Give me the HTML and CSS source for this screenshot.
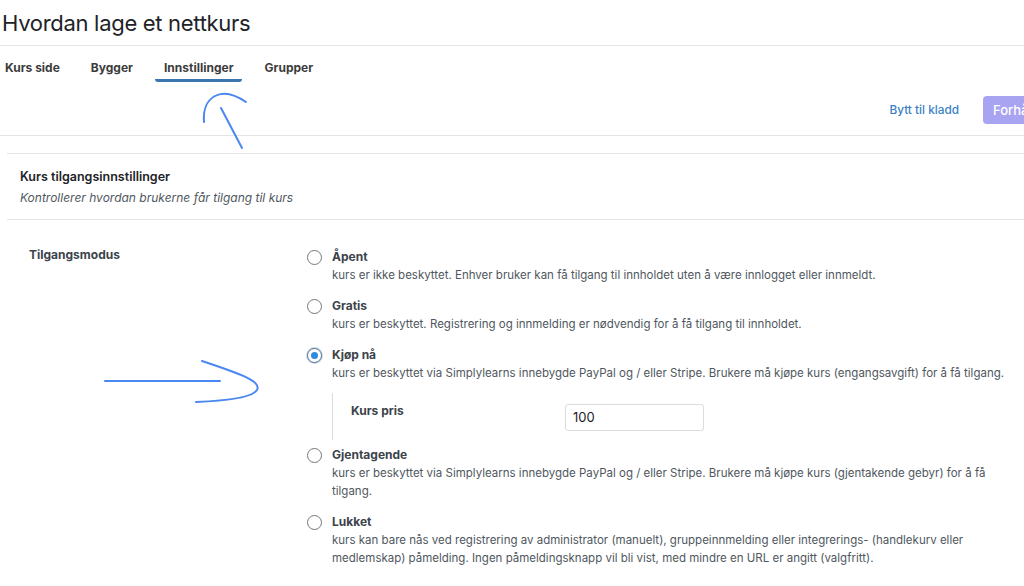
FILE: index.html
```html
<!DOCTYPE html>
<html lang="no">
<head>
<meta charset="utf-8">
<title>Hvordan lage et nettkurs</title>
<link rel="stylesheet" href="styles.css">
</head>
<body>
<div class="page">
  <h1 class="title">Hvordan lage et nettkurs</h1>
  <nav class="tabs">
    <a class="tab">Kurs side</a>
    <a class="tab">Bygger</a>
    <a class="tab active">Innstillinger</a>
    <a class="tab">Grupper</a>
  </nav>
  <div class="actions">
    <a class="link">Bytt til kladd</a>
    <button class="btn">Forhåndsvis</button>
  </div>

  <section class="panel">
    <header class="panel-head">
      <h2 class="panel-title">Kurs tilgangsinnstillinger</h2>
      <p class="panel-sub">Kontrollerer hvordan brukerne får tilgang til kurs</p>
    </header>
    <div class="row">
      <div class="row-label">Tilgangsmodus</div>
      <div class="options">
        <div class="opt">
          <span class="radio"></span>
          <div class="opt-body">
            <div class="opt-title">Åpent</div>
            <div class="opt-desc">kurs er ikke beskyttet. Enhver bruker kan få tilgang til innholdet uten å være innlogget eller innmeldt.</div>
          </div>
        </div>
        <div class="opt">
          <span class="radio"></span>
          <div class="opt-body">
            <div class="opt-title">Gratis</div>
            <div class="opt-desc">kurs er beskyttet. Registrering og innmelding er nødvendig for å få tilgang til innholdet.</div>
          </div>
        </div>
        <div class="opt has-sub">
          <span class="radio checked"></span>
          <div class="opt-body">
            <div class="opt-title">Kjøp nå</div>
            <div class="opt-desc">kurs er beskyttet via Simplylearns innebygde PayPal og / eller Stripe. Brukere må kjøpe kurs (engangsavgift) for å få tilgang.</div>
            <div class="sub">
              <div class="sub-label">Kurs pris</div>
              <div class="input">100</div>
            </div>
          </div>
        </div>
        <div class="opt">
          <span class="radio"></span>
          <div class="opt-body">
            <div class="opt-title">Gjentagende</div>
            <div class="opt-desc">kurs er beskyttet via Simplylearns innebygde PayPal og / eller Stripe. Brukere må kjøpe kurs (gjentakende gebyr) for å få tilgang.</div>
          </div>
        </div>
        <div class="opt">
          <span class="radio"></span>
          <div class="opt-body">
            <div class="opt-title">Lukket</div>
            <div class="opt-desc">kurs kan bare nås ved registrering av administrator (manuelt), gruppeinnmelding eller integrerings- (handlekurv eller medlemskap) påmelding. Ingen påmeldingsknapp vil bli vist, med mindre en URL er angitt (valgfritt).</div>
          </div>
        </div>
      </div>
    </div>
  </section>

  <svg class="annot" width="1024" height="586" viewBox="0 0 1024 586" aria-hidden="true">
    <path d="M204 122 C202 98 220 84 246 102" />
    <path d="M221 108 L242 148" />
    <path d="M105 381 L220 381" />
    <path d="M202 361 C238 373 262 381 257 390 C252 398 222 401 196 402" />
  </svg>
</div>
</body>
</html>
```

FILE: styles.css
```css
* { box-sizing: border-box; }
html, body { margin: 0; padding: 0; }
body {
  background: #fff;
  font-family: Inter, "Liberation Sans", Arial, sans-serif;
  color: #3c434a;
  width: 1024px;
  height: 586px;
  overflow: hidden;
}
.page { position: relative; width: 1024px; }

.title {
  margin: 0;
  height: 46px;
  padding: 10px 0 0 2px;
  font-size: 22px;
  font-weight: 400;
  line-height: 26px;
  color: #1d2327;
  letter-spacing: -0.3px;
  border-bottom: 1px solid #e4e4e4;
}

.tabs {
  display: flex;
  height: 40px;
  padding: 14px 0 0 5px;
  gap: 31px;
}
.tab {
  position: relative;
  font-size: 12px;
  font-weight: 700;
  line-height: 16px;
  height: 16px;
  color: #3c3c3c;
}
.tab.active::after {
  content: "";
  position: absolute;
  left: -9px;
  right: -8px;
  top: 19px;
  height: 3px;
  border-radius: 0 0 3px 3px;
  background: #3a75ad;
}

.actions {
  display: flex;
  align-items: center;
  justify-content: flex-end;
  gap: 24px;
  height: 50px;
  padding-bottom: 2px;
  margin-right: -59px;
  border-bottom: 1px solid #e4e4e4;
}
.link {
  font-size: 11.8px;
  font-weight: 500;
  color: #3a82c4;
}
.btn {
  height: 28px;
  width: 100px;
  border: 0;
  border-radius: 4px;
  background: #a9a4f1;
  color: #fff;
  font-family: inherit;
  font-size: 13px;
  font-weight: 500;
  text-align: left;
  padding: 0 10px;
}

.panel {
  margin: 17px 0 0 7px;
  border-top: 1px solid #e4e4e4;
}
.panel-head {
  padding: 15px 0 13px 13px;
  border-bottom: 1px solid #e4e4e4;
}
.panel-title {
  margin: 0;
  font-size: 12.5px;
  font-weight: 600;
  line-height: 16px;
  color: #1d2327;
}
.panel-sub {
  margin: 5px 0 0;
  font-size: 12px;
  font-style: italic;
  line-height: 16px;
  color: #50575e;
}

.row {
  display: flex;
  padding-top: 24px;
}
.row-label {
  width: 300px;
  padding: 3px 0 0 22px;
  font-size: 12px;
  font-weight: 700;
  line-height: 16px;
  color: #3c434a;
}
.options {
  flex: 1;
  padding-top: 4px;
  padding-right: 14px;
}
.opt {
  display: flex;
  gap: 10px;
  margin-bottom: 13px;
}
.opt.has-sub { margin-bottom: 6px; }
.radio {
  flex: none;
  width: 15px;
  height: 15px;
  margin-top: 2px;
  border: 1.5px solid #72777c;
  border-radius: 50%;
  background: #fff;
  position: relative;
}
.radio.checked {
  border-color: #5a6f85;
  box-shadow: 0 0 0 1px #c5daf0;
}
.radio.checked::after {
  content: "";
  position: absolute;
  left: 2.5px;
  top: 2.5px;
  width: 7px;
  height: 7px;
  border-radius: 50%;
  background: #2f8be0;
}
.opt-body { flex: 1; }
.opt-title {
  font-size: 12px;
  font-weight: 700;
  line-height: 18px;
  color: #3c434a;
}
.opt-desc {
  font-size: 11.5px;
  line-height: 18px;
  color: #50575e;
}
.sub {
  display: flex;
  align-items: flex-start;
  margin-top: 11px;
  padding: 10px 0 9px 18px;
  border-left: 1px solid #dcdcde;
}
.sub-label {
  width: 214px;
  font-size: 12px;
  font-weight: 700;
  line-height: 16px;
  color: #3c434a;
}
.input {
  width: 139px;
  height: 27px;
  margin-top: 1px;
  padding: 0 7px;
  border: 1px solid #dcdcde;
  border-radius: 3px;
  font-size: 13px;
  line-height: 25px;
  color: #1d2327;
}

.annot {
  position: absolute;
  left: 0;
  top: 0;
  pointer-events: none;
  fill: none;
  stroke: #4a87f0;
  stroke-width: 2;
  stroke-linecap: round;
}
```
